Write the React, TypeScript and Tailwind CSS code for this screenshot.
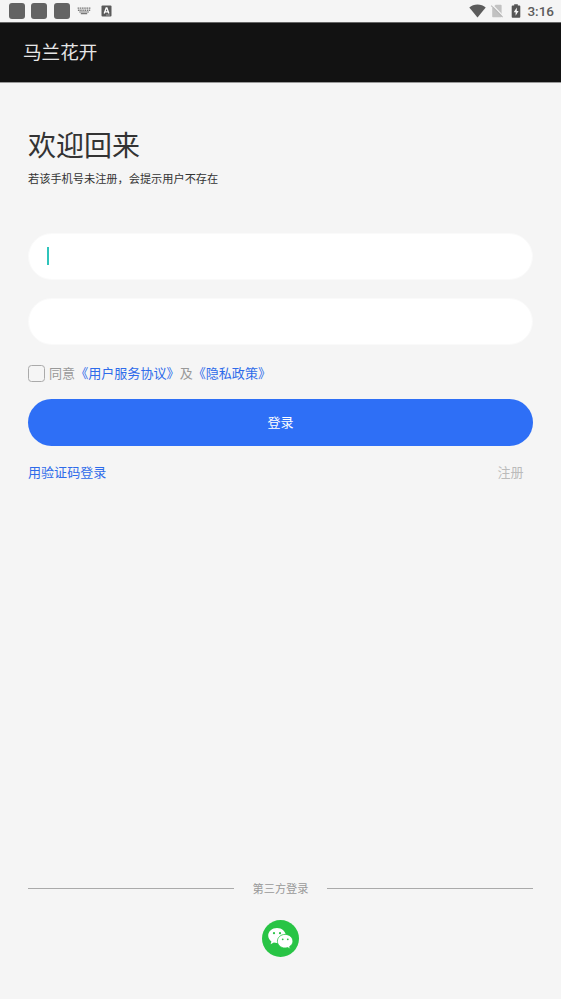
import React, { useState } from 'react';

const notifications = ['first', 'second', 'third'];

function KeyboardIcon() {
  return (
    <svg width="14" height="8" viewBox="0 0 14 8" fill="#777">
      <path d="M0.6 0.5h1.6v1.2H0.6zM2.8 0.5h1.6v1.2H2.8zM5 0.5h1.6v1.2H5zM7.2 0.5h1.6v1.2H7.2zM9.4 0.5H11v1.2H9.4zM11.6 0.5h1.8v1.2h-1.8z" />
      <path d="M0.9 2.6h1.7v1.3H0.9zM3.2 2.6h1.5v1.3H3.2zM5.4 2.6h1.4v1.3H5.4zM7.5 2.6H9v1.3H7.5zM9.7 2.6h1.4v1.3H9.7zM11.7 2.6h1.5v1.3h-1.5z" />
      <path d="M2.2 4.5h9.8v.9H2.2zM3.8 6h6.4v1.2H3.8z" />
    </svg>
  );
}

function InputMethodIcon() {
  return (
    <svg width="11" height="12" viewBox="0 0 11 12">
      <rect x="0.5" y="0.5" width="10" height="11" rx="1" fill="#5a5a5a" />
      <path
        d="M3.2 8.4 5.2 3h.7l2 5.4M4 6.8h3.1"
        fill="none"
        stroke="#fff"
        strokeWidth="1.3"
      />
      <path d="M5 10h4" stroke="#bbb" strokeWidth="0.7" />
    </svg>
  );
}

function WifiIcon() {
  return (
    <svg width="17" height="14" viewBox="0 0 17 14" fill="#5c5c5c">
      <path d="M8.5 13.6 0.3 3.4C2.5 1.5 5.3 0.4 8.5 0.4s6 1.1 8.2 3z" />
    </svg>
  );
}

function NoSimIcon() {
  return (
    <svg width="14" height="14" viewBox="0 0 14 14">
      <path d="M5.6 0.8h5.2q.8 0 .8.8v10.8q0 .8-.8.8H3q-.8 0-.8-.8V4.2z" fill="#c2c2c2" />
      <path d="M2.4 1 13.6 12.4" stroke="#f5f5f5" strokeWidth="1.3" />
      <path d="M1.2 1.6 12.6 13.2" stroke="#b8b8b8" strokeWidth="1.1" />
    </svg>
  );
}

function BatteryIcon() {
  return (
    <svg width="10" height="14" viewBox="0 0 10 14">
      <path
        d="M3.2 0.3h3.6v1.3h1.6q.9 0 .9.9v10.3q0 .9-.9.9H1.6q-.9 0-.9-.9V2.5q0-.9.9-.9h1.6z"
        fill="#555"
      />
      <path d="M5.8 3.5 2.7 8.2h1.9v3.5l3-4.8H5.8z" fill="#f5f5f5" />
    </svg>
  );
}

function WechatIcon() {
  return (
    <svg width="37" height="37" viewBox="0 0 37 37">
      <circle cx="18.5" cy="18.5" r="18.5" fill="#28c445" />
      <path
        d="M15 8c-4.9 0-8.8 3.4-8.8 7.6 0 2.4 1.2 4.5 3.2 5.9l-.8 2.8 3.2-1.7c1 .3 2.1.5 3.2.5 4.9 0 8.8-3.4 8.8-7.5S19.9 8 15 8z"
        fill="#fff"
      />
      <path
        d="M23.1 14.4c-4.3 0-7.7 3-7.7 6.8s3.4 6.8 7.7 6.8c.9 0 1.8-.1 2.6-.4l2.6 1.5-.7-2.5c2-1.2 3.3-3.2 3.3-5.4 0-3.8-3.5-6.8-7.8-6.8z"
        fill="#fff"
        stroke="#28c445"
        strokeWidth="0.8"
      />
      <g fill="#28c445">
        <circle cx="12" cy="13.2" r="1.1" />
        <circle cx="18" cy="13.2" r="1.1" />
        <circle cx="20.7" cy="19.3" r="0.9" />
        <circle cx="25.8" cy="19.3" r="0.9" />
      </g>
    </svg>
  );
}

function StatusBar() {
  return (
    <div className="flex h-[22px] shrink-0 items-center justify-between pr-[7px] pl-[9px]">
      <div className="flex items-center">
        <div className="flex gap-[6.4px]">
          {notifications.map((name) => (
            <div key={name} className="size-4 rounded-[3px] bg-[#636363]" />
          ))}
        </div>
        <div className="ml-[7px] flex items-center gap-[10px]">
          <KeyboardIcon />
          <InputMethodIcon />
        </div>
      </div>
      <div className="flex items-center">
        <WifiIcon />
        <div className="ml-[4px] flex items-center gap-[7px]">
          <NoSimIcon />
          <BatteryIcon />
        </div>
        <span className="ml-[6px] pt-px font-[Roboto,sans-serif] text-[13.5px] leading-none font-medium text-[#5c5c5c]">
          3:16
        </span>
      </div>
    </div>
  );
}

export default function App() {
  const [phone, setPhone] = useState('');
  const [password, setPassword] = useState('');
  const [agreed, setAgreed] = useState(false);

  return (
    <div className="flex h-screen flex-col bg-[#f5f5f5] font-['Noto_Sans_CJK_SC',sans-serif]">
      <StatusBar />
      <header className="flex h-[61px] shrink-0 items-center border-y border-t-[#666] border-b-[#999] bg-[#121212] pb-[2px] pl-[23px]">
        <h1 className="text-[18.6px] leading-none font-normal text-[#e6e6e6]">马兰花开</h1>
      </header>
      <main className="flex flex-1 flex-col px-7 pb-[42px]">
        <h2 className="mt-[40px] text-[28px] leading-[42px] font-normal text-[#333]">
          欢迎回来
        </h2>
        <p className="mt-[5px] text-[11.2px] leading-[16px] text-[#333]">
          若该手机号未注册，会提示用户不存在
        </p>
        <form className="mt-[47px] flex flex-col" onSubmit={(e) => e.preventDefault()}>
          <label className="flex h-[47px] items-center rounded-full border border-[#fafafa] bg-white px-[18px] pb-[2px]">
            {!phone && <span className="h-[18px] w-[1.5px] bg-[#2fc4bb]" />}
            <input
              className="min-w-0 flex-1 text-[13px] outline-none"
              value={phone}
              onChange={(e) => setPhone(e.target.value)}
            />
          </label>
          <label className="mt-[18px] flex h-[47px] items-center rounded-full border border-[#fafafa] bg-white px-[18px]">
            <input
              type="password"
              className="min-w-0 flex-1 text-[13px] outline-none"
              value={password}
              onChange={(e) => setPassword(e.target.value)}
            />
          </label>
          <div className="mt-[18px] flex h-5 items-center text-[13.07px] text-[#999]">
            <input
              type="checkbox"
              className="mr-[4px] size-[17px] appearance-none rounded-[3.5px] border-[1.5px] border-[#aaa] checked:bg-[#2e6ff6]"
              checked={agreed}
              onChange={(e) => setAgreed(e.target.checked)}
            />
            <span>同意</span>
            <span className="text-[#2e6bea]">《用户服务协议》</span>
            <span>及</span>
            <span className="text-[#2e6bea]">《隐私政策》</span>
          </div>
          <button
            type="submit"
            className="mt-[16px] h-[47px] rounded-full bg-[#2e6ff6] pb-px text-[13.07px] text-white"
          >
            登录
          </button>
        </form>
        <div className="mt-[15.5px] flex justify-between pr-[9.5px] text-[13.07px] leading-5">
          <span className="text-[#2e6bea]">用验证码登录</span>
          <span className="text-[#bbb]">注册</span>
        </div>
        <div className="mt-auto flex items-center text-[11.2px] leading-4 text-[#999]">
          <div className="h-px flex-1 bg-[#aaa]" />
          <span className="px-[18.5px]">第三方登录</span>
          <div className="h-px flex-1 bg-[#aaa]" />
        </div>
        <button type="button" className="mt-[24px] flex justify-center">
          <WechatIcon />
        </button>
      </main>
    </div>
  );
}
